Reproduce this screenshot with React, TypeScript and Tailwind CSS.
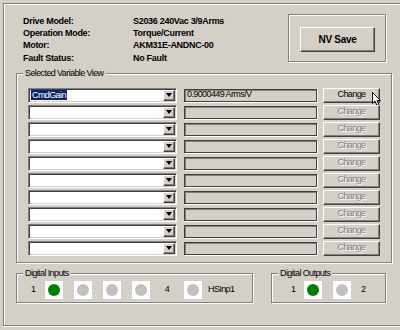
import React from "react"

const sunken =
  "border border-t-[#808080] border-l-[#808080] border-b-white border-r-white shadow-[inset_1px_1px_0_#404040,inset_-1px_-1px_0_#d4d0c8]"
const raised =
  "border border-t-white border-l-white border-b-[#404040] border-r-[#404040] shadow-[inset_-1px_-1px_0_#808080]"
const etched = "border border-[#808080] shadow-[inset_1px_1px_0_#fff,1px_1px_0_#fff]"

const info = [
  ["Drive Model:", "S2036 240Vac 3/9Arms"],
  ["Operation Mode:", "Torque/Current"],
  ["Motor:", "AKM31E-ANDNC-00"],
  ["Fault Status:", "No Fault"],
]

function Led({ on }: { on?: boolean }) {
  return (
    <div className="flex h-[18px] w-[18px] shrink-0 items-center justify-center bg-white">
      <div className={`h-[12px] w-[12px] rounded-full ${on ? "bg-[#008000]" : "bg-[#c0c0c0]"}`} />
    </div>
  )
}

function Combo({ text }: { text?: string }) {
  return (
    <div className={`flex h-[15px] w-[149px] shrink-0 items-stretch bg-white p-[1px] ${sunken}`}>
      <div className="flex flex-1 items-center pl-[1px]">
        {text && (
          <span className="bg-[#0a246a] px-[1px] leading-[10px] text-white">{text}</span>
        )}
      </div>
      <div className={`flex w-[12px] items-center justify-center bg-[#d4d0c8] ${raised}`}>
        <div className="h-0 w-0 border-x-[3px] border-t-[4px] border-x-transparent border-t-black" />
      </div>
    </div>
  )
}

function Row({ first }: { first?: boolean }) {
  return (
    <div className="flex h-[16px] items-center">
      <Combo text={first ? "CmdGain" : undefined} />
      <div className="ml-[7px] flex h-[13px] w-[133px] items-center border border-[#404040] pl-[2px] shadow-[inset_1px_1px_0_#808080,1px_1px_0_#fff]">
        {first ? "0.9000449 Arms/V" : ""}
      </div>
      <div
        className={`relative ml-[6px] flex h-[15px] w-[57px] items-center justify-center ${raised} ${
          first ? "text-black" : "text-[#808080] [text-shadow:1px_1px_0_#fff]"
        }`}
      >
        Change
        {first && (
          <svg
            className="absolute left-[48px] top-[3px]"
            width="10"
            height="15"
            viewBox="0 0 10 15"
          >
            <path
              d="M0.5 0.5 L0.5 11.5 L3 9 L5 13.5 L7 12.5 L5 8.5 L8.5 8.5 Z"
              fill="#fff"
              stroke="#000"
              strokeWidth="1"
              strokeLinejoin="miter"
            />
          </svg>
        )}
      </div>
    </div>
  )
}

export default function App() {
  return (
    <div className="h-[330px] w-[400px] overflow-hidden bg-[#d4d0c8] pl-[3px] pt-[3px] font-['Liberation_Sans',Arial,sans-serif] text-[9px] tracking-[-0.6px] text-black">
      <div className="h-[323px] w-[420px] border-b border-l border-t border-[#808080] shadow-[inset_1px_1px_0_#fff,0_1px_0_#fff]">
        {/* header */}
        <div className="flex h-[69px] items-start">
          <div className="w-[284px] pl-[19px] pt-[11px] font-bold tracking-[-0.3px]">
            {info.map(([k, v]) => (
              <div key={k} className="flex h-[12.4px] items-center leading-none">
                <span className="w-[110px]">{k}</span>
                <span>{v}</span>
              </div>
            ))}
          </div>
          <div className={`mt-[10px] h-[48px] w-[98px] pl-[11px] pt-[12px] ${etched}`}>
            <div
              className={`flex h-[25px] w-[75px] items-center justify-center text-[10px] font-bold tracking-[-0.3px] ${raised}`}
            >
              NV Save
            </div>
          </div>
        </div>

        {/* selected variable view */}
        <div className={`relative ml-[12px] h-[190px] w-[376px] pl-[11px] pt-[13px] ${etched}`}>
          <span className="absolute -top-[7px] left-[6px] bg-[#d4d0c8] px-[2px] leading-[12px]">
            Selected Variable View
          </span>
          <div className="flex flex-col gap-[1px]">
            {Array.from({ length: 10 }).map((_, i) => (
              <Row key={i} first={i === 0} />
            ))}
          </div>
        </div>

        {/* digital io */}
        <div className="ml-[12px] mt-[10px] flex gap-[18px]">
          <div className={`relative flex h-[30px] w-[237px] items-center pl-[14px] pt-[3px] ${etched}`}>
            <span className="absolute -top-[7px] left-[6px] bg-[#d4d0c8] px-[2px] leading-[12px]">
              Digital Inputs
            </span>
            <span className="w-[14px]">1</span>
            <Led on />
            <div className="ml-[11px]">
              <Led />
            </div>
            <div className="ml-[11px]">
              <Led />
            </div>
            <div className="ml-[11px]">
              <Led />
            </div>
            <span className="w-[34px] text-center">4</span>
            <Led />
            <span className="ml-[6px]">HSInp1</span>
          </div>
          <div className={`relative flex h-[30px] w-[115px] items-center pl-[19px] pt-[3px] ${etched}`}>
            <span className="absolute -top-[7px] left-[6px] bg-[#d4d0c8] px-[2px] leading-[12px]">
              Digital Outputs
            </span>
            <span className="w-[13px]">1</span>
            <Led on />
            <div className="ml-[11px]">
              <Led />
            </div>
            <span className="ml-[10px]">2</span>
          </div>
        </div>
      </div>
    </div>
  )
}
